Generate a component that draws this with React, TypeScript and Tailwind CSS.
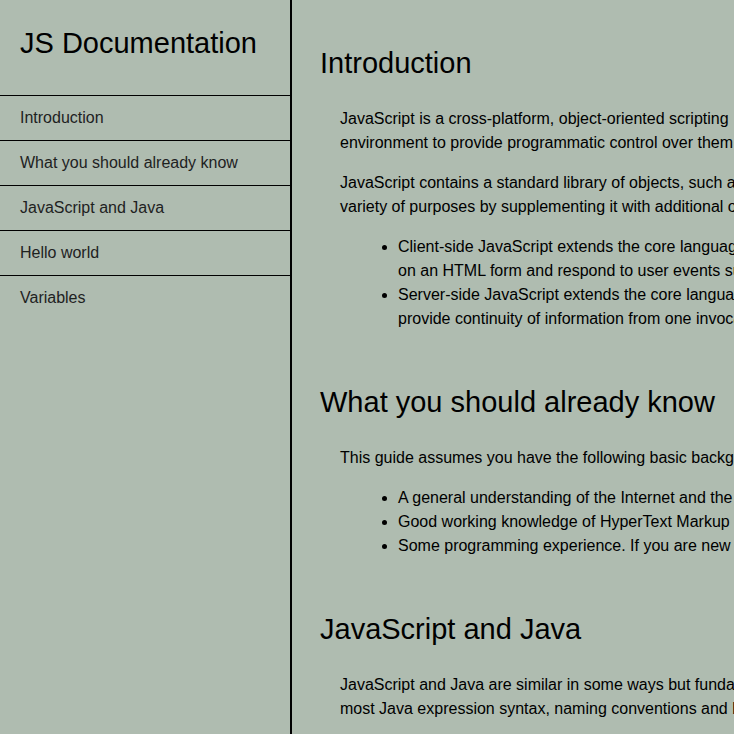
type Block = { kind: "text"; lines: string[] } | { kind: "list"; items: string[][] };

type Topic = { id: string; title: string; blocks: Block[] };

const topics: Topic[] = [
  {
    id: "introduction",
    title: "Introduction",
    blocks: [
      {
        kind: "text",
        lines: [
          "JavaScript is a cross-platform, object-oriented scripting",
          "environment to provide programmatic control over them",
        ],
      },
      {
        kind: "text",
        lines: [
          "JavaScript contains a standard library of objects, such a",
          "variety of purposes by supplementing it with additional o",
        ],
      },
      {
        kind: "list",
        items: [
          [
            "Client-side JavaScript extends the core languag",
            "on an HTML form and respond to user events su",
          ],
          [
            "Server-side JavaScript extends the core langua",
            "provide continuity of information from one invoca",
          ],
        ],
      },
    ],
  },
  {
    id: "what-you-should-already-know",
    title: "What you should already know",
    blocks: [
      { kind: "text", lines: ["This guide assumes you have the following basic backg"] },
      {
        kind: "list",
        items: [
          ["A general understanding of the Internet and the"],
          ["Good working knowledge of HyperText Markup"],
          ["Some programming experience. If you are new"],
        ],
      },
    ],
  },
  {
    id: "javascript-and-java",
    title: "JavaScript and Java",
    blocks: [
      {
        kind: "text",
        lines: [
          "JavaScript and Java are similar in some ways but funda",
          "most Java expression syntax, naming conventions and b",
        ],
      },
    ],
  },
];

const links = [
  { id: "introduction", label: "Introduction" },
  { id: "what-you-should-already-know", label: "What you should already know" },
  { id: "javascript-and-java", label: "JavaScript and Java" },
  { id: "hello-world", label: "Hello world" },
  { id: "variables", label: "Variables" },
];

function Lines({ lines }: { lines: string[] }) {
  return (
    <>
      {lines.map((line) => (
        <span key={line} className="block whitespace-nowrap">
          {line}
        </span>
      ))}
    </>
  );
}

function Section({ topic }: { topic: Topic }) {
  return (
    <section id={topic.id}>
      <h2 className="mb-6 whitespace-nowrap text-[29px] leading-10">{topic.title}</h2>
      <div className="flex flex-col gap-4 pl-5">
        {topic.blocks.map((block, i) =>
          block.kind === "text" ? (
            <p key={i}>
              <Lines lines={block.lines} />
            </p>
          ) : (
            <ul key={i} className="list-disc pl-[58px]">
              {block.items.map((item) => (
                <li key={item[0]}>
                  <Lines lines={item} />
                </li>
              ))}
            </ul>
          ),
        )}
      </div>
    </section>
  );
}

export default function App() {
  return (
    <div className="flex h-screen overflow-hidden bg-[#afbcb0] font-['Liberation_Sans',Arial,sans-serif] text-base leading-6 text-black">
      <nav className="w-[292px] shrink-0 border-r-2 border-black">
        <h1 className="px-5 pt-[23px] pb-8 text-[29px] leading-10">JS Documentation</h1>
        <ul>
          {links.map((link) => (
            <li key={link.id} className="border-t border-black">
              <a href={`#${link.id}`} className="block px-5 py-[10px] text-[#1e221f]">
                {link.label}
              </a>
            </li>
          ))}
        </ul>
      </nav>
      <main className="flex min-w-0 flex-1 flex-col gap-[51px] overflow-hidden pt-[43px] pl-7">
        {topics.map((topic) => (
          <Section key={topic.id} topic={topic} />
        ))}
      </main>
    </div>
  );
}
